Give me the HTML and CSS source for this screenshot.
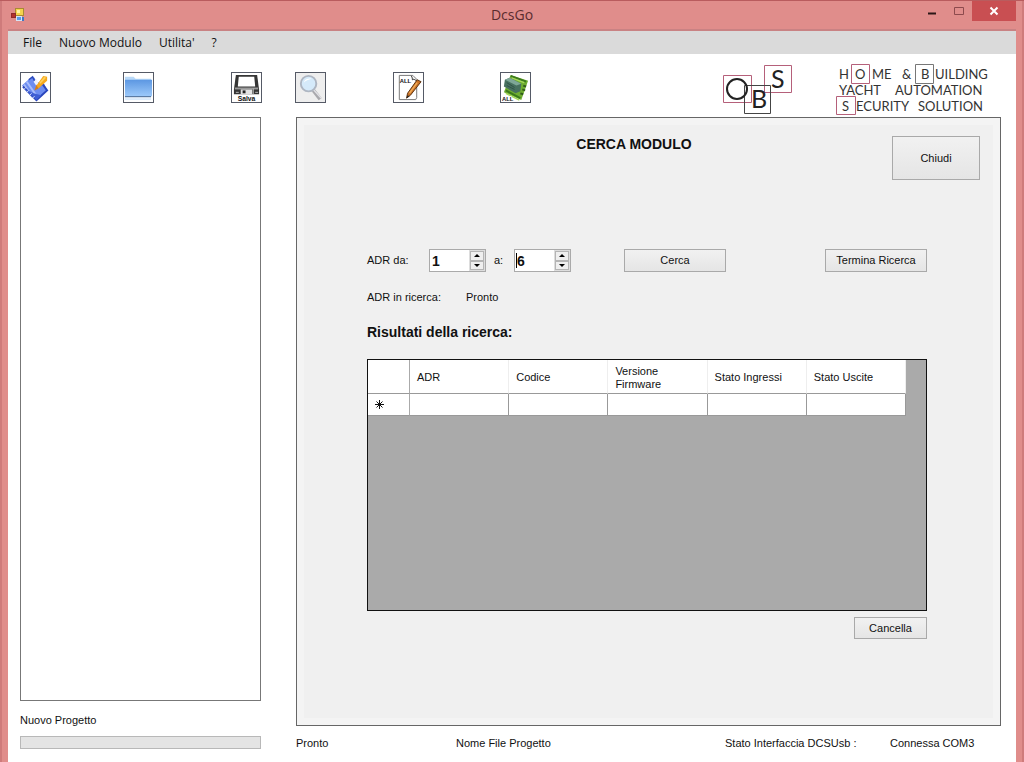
FILE: index.html
```html
<!DOCTYPE html>
<html lang="it">
<head>
<meta charset="utf-8">
<title>DcsGo</title>
<link rel="stylesheet" href="styles.css">
</head>
<body>
<div class="window">
  <header class="titlebar">
    <svg class="app-icon" width="14" height="14" viewBox="0 0 14 14" aria-hidden="true">
      <rect x="4.500" y="0.500" width="8" height="7" fill="#f5d34c" stroke="#a88a34"/>
      <rect x="6" y="2" width="3" height="3" fill="#fff3a8"/>
      <rect x="0.500" y="5.500" width="4" height="4" fill="#b3312c" stroke="#8f2a2a"/>
      <rect x="5.500" y="8.500" width="5" height="4" fill="#5b9be8" stroke="#d5e4f5"/>
      <path d="M11 9v4h2V9z" fill="#3f76c4"/>
    </svg>
    <h1 class="title">DcsGo</h1>
    <div class="window-buttons">
      <button class="wbtn" type="button" aria-label="Riduci a icona"><svg width="10" height="10"><path d="M1 7.500h8" stroke="#2b1717" stroke-width="2"/></svg></button>
      <button class="wbtn" type="button" aria-label="Ingrandisci"><svg width="10" height="10"><path d="M.5 1.500h9v7h-9z" fill="none" stroke="#8d4a4d"/></svg></button>
      <button class="wbtn wbtn-close" type="button" aria-label="Chiudi finestra"><svg width="10" height="10"><path d="M1.500 1.500l7 7M8.500 1.500l-7 7" stroke="#fff" stroke-width="2"/></svg></button>
    </div>
  </header>

  <nav class="menu">
    <button type="button">File</button>
    <button type="button">Nuovo Modulo</button>
    <button type="button">Utilita'</button>
    <button type="button">?</button>
  </nav>

  <div class="toolbar">
    <div class="tools tools-left">
      <button class="tool" type="button" aria-label="Nuovo progetto">
        <svg viewBox="0 0 30 30">
          <path d="M1 13L11 4l3 1 2 4 8 2 3 7-9 9-3 1z" fill="#6d8df0"/>
          <path d="M3 12l9 13M6 9l11 16" stroke="#a9bdfb" stroke-width="2"/>
          <path d="M2 14l14 14 11-10-5-7" fill="none" stroke="#2a46bd" stroke-width="2"/>
          <path d="M3 16l13 12 5-5-8-2z" fill="#3f5fd4"/>
          <path d="M8 7l4-3 3 6 6 3" fill="none" stroke="#2948bb" stroke-width="1.500"/>
          <path d="M13 9l3-3 3 7-2 2z" fill="#eef2ff"/>
          <path d="M3 17l2-2M6 20l2-2M9 23l2-2M12 26l2-2" stroke="#dfe7ff"/>
          <path d="M16 13l7-10 4 1v4l-9 8z" fill="#f6a81c"/>
          <path d="M19 10l5-6 2 1-6 6z" fill="#ffd15c"/>
          <path d="M16 12l2 4-4 2z" fill="#d97d12"/>
        </svg>
      </button>
      <button class="tool" type="button" aria-label="Apri">
        <svg viewBox="0 0 30 30">
          <defs><linearGradient id="folder" x2="0" y2="1"><stop stop-color="#5c97e2"/><stop offset="1" stop-color="#9cc9fa"/></linearGradient></defs>
          <path d="M1 4h9l2 2h16v19H1z" fill="#b9d9f8"/>
          <path d="M1 7h28v17H1z" fill="url(#folder)"/>
          <path d="M1 24.500h27" stroke="#44648e"/>
          <path d="M1 27h27" stroke="#dcebfa" stroke-width="2"/>
        </svg>
      </button>
      <button class="tool" type="button" aria-label="Salva">
        <svg viewBox="0 0 30 30">
          <path d="M4 2h22l2 15v5H2v-5z" fill="#353535"/>
          <path d="M7 4h16l1 10H6z" fill="#fff"/>
          <path d="M3 16h24" stroke="#999" stroke-width="2"/>
          <path d="M9 17h12v5H9z" fill="#e3e3e3"/>
          <path d="M11 18h3v3h-3z" fill="#222"/>
          <path d="M22 16v6M4 20h3M24 20h3" stroke="#bbb"/>
          <text x="15" y="29" text-anchor="middle" class="tool-text">Salva</text>
        </svg>
      </button>
    </div>
    <div class="tools tools-right">
      <button class="tool tool-search" type="button" aria-label="Cerca modulo">
        <svg viewBox="0 0 30 30">
          <path d="M18 18l7 9" stroke="#a9a9ad" stroke-width="4"/>
          <path d="M18 17l8 9" stroke="#e2e2e6" stroke-width="1.500"/>
          <circle cx="13" cy="11" r="8" fill="#d5eafa" stroke="#aeb6c2" stroke-width="2"/>
          <path d="M8 10c1-4 5-5 8-4-3 1-6 2-8 4z" fill="#fff"/>
        </svg>
      </button>
      <button class="tool" type="button" aria-label="Modifica tutti">
        <svg viewBox="0 0 30 30">
          <path d="M5.500 2.500h14l4 4v19l-1 2h-17z" fill="#fff" stroke="#777"/>
          <path d="M18 3c1 2 1 3 1 4 2-1 3 0 5 2" fill="#ddd" stroke="#333"/>
          <text x="6" y="10" class="tool-text tool-text-small">ALL</text>
          <path d="M24 7l4 2-11 14-4 3 1-5z" fill="#c87025" stroke="#5b3210"/>
          <path d="M24 10l-8 11" stroke="#f2ad58" stroke-width="1.500"/>
          <path d="M13 26l1-3 2 1z" fill="#222"/>
        </svg>
      </button>
      <button class="tool" type="button" aria-label="Programma tutti">
        <svg viewBox="0 0 30 30">
          <path d="M10 2l18 6-7 20L3 20z" fill="#6fae31"/>
          <path d="M10 3l16 6M5 18l15 8" stroke="#3c7a1d" stroke-width="2"/>
          <path d="M11 5l13 5M5 21l14 7" stroke="#a5d75b" stroke-width="1.500"/>
          <path d="M4 7l5-2 12 6-1 8-5 2L3 14z" fill="#47705f"/>
          <path d="M4 7l5-2 12 6-5 2z" fill="#7ea797"/>
          <path d="M6 10l8 5M6 13l8 4" stroke="#2f5247"/>
          <path d="M23 13l3 1M22 17l3 1M20 21l3 1" stroke="#315d1d" stroke-width="2"/>
          <path d="M1 24h10v5H1z" fill="#fff"/>
          <text x="1" y="29" class="tool-text tool-text-small">ALL</text>
        </svg>
      </button>
    </div>
    <svg class="brand" width="270" height="52" viewBox="0 0 270 52" role="img" aria-label="OBS Home &amp; Building Yacht Automation Security Solution">
      <g fill="none">
        <path d="M1.500 11.500h28v27h-28zM42.500 1.500h27v27h-27z" stroke="#b5607a"/>
        <path d="M22.500 21.500h26v28h-26z" stroke="#444"/>
        <circle cx="15" cy="25" r="10" stroke="#222" stroke-width="2"/>
        <path d="M129.500 .5h18v19h-18zM114.500 32.500h19v18h-19z" stroke="#b5607a"/>
        <path d="M193.500 .5h18v19h-18z" stroke="#777"/>
      </g>
      <text x="29" y="44" class="brand-big">B</text>
      <text x="49" y="24" class="brand-big">S</text>
      <g class="brand-small">
        <text x="117" y="15">H</text><text x="133" y="15">O</text><text x="150" y="15">ME</text>
        <text x="180" y="15">&amp;</text><text x="199" y="15">B</text><text x="213" y="15">UILDING</text>
        <text x="117" y="31">YACHT</text><text x="173" y="31">AUTOMATION</text>
        <text x="120" y="47">S</text><text x="134" y="47">ECURITY</text><text x="196" y="47">SOLUTION</text>
      </g>
    </svg>
  </div>

  <main class="workspace">
    <aside class="project">
      <div class="tree"></div>
      <label class="project-label" for="avanzamento">Nuovo Progetto</label>
      <progress id="avanzamento" class="progress" value="0" max="100"></progress>
    </aside>

    <div class="content">
      <section class="panel">
        <div class="panel-head">
          <h2>CERCA MODULO</h2>
          <button class="btn btn-close" type="button">Chiudi</button>
        </div>
        <div class="panel-body">
          <form class="search">
            <label for="da" class="label-from">ADR da:</label>
            <div class="spin">
              <input id="da" type="text" inputmode="numeric" value="1">
              <div class="arrows">
                <button type="button" aria-label="Aumenta"><svg width="6" height="3"><path d="M0 3l3-3 3 3z"/></svg></button>
                <button type="button" aria-label="Diminuisci"><svg width="6" height="3"><path d="M0 0l3 3 3-3z"/></svg></button>
              </div>
            </div>
            <label for="a" class="label-to">a:</label>
            <div class="spin spin-active">
              <input id="a" type="text" inputmode="numeric" value="6">
              <div class="arrows">
                <button type="button" aria-label="Aumenta"><svg width="6" height="3"><path d="M0 3l3-3 3 3z"/></svg></button>
                <button type="button" aria-label="Diminuisci"><svg width="6" height="3"><path d="M0 0l3 3 3-3z"/></svg></button>
              </div>
            </div>
            <button class="btn btn-search" type="button">Cerca</button>
            <button class="btn btn-stop" type="button">Termina Ricerca</button>
          </form>
          <div class="progress-line"><span>ADR in ricerca:</span><span>Pronto</span></div>
          <h3>Risultati della ricerca:</h3>
          <div class="grid-view">
            <table>
              <thead>
                <tr><th class="row-head"></th><th>ADR</th><th>Codice</th><th>Versione Firmware</th><th>Stato Ingressi</th><th>Stato Uscite</th></tr>
              </thead>
              <tbody>
                <tr><th class="row-head" aria-label="Nuova riga"><svg width="9" height="9"><path d="M4.500 0v9M0 4.500h9M1.500 1.500l6 6M7.500 1.500l-6 6" stroke="#111"/></svg></th><td></td><td></td><td></td><td></td><td></td></tr>
              </tbody>
            </table>
          </div>
          <button class="btn btn-clear" type="button">Cancella</button>
        </div>
      </section>
      <footer class="status">
        <span>Pronto</span>
        <span>Nome File Progetto</span>
        <span class="status-usb">Stato Interfaccia DCSUsb :</span>
        <span class="status-port">Connessa COM3</span>
      </footer>
    </div>
  </main>
</div>
</body>
</html>
```

FILE: styles.css
```css
* {
  box-sizing: border-box;
}

body {
  margin: 0;
  background: #e08d8b;
  color: #111;
  font: 11px/13px "Liberation Sans", Arial, sans-serif;
}

button,
input {
  font: inherit;
  color: inherit;
  margin: 0;
}

h1,
h2,
h3 {
  margin: 0;
}

svg {
  display: block;
}

.window {
  display: flex;
  flex-direction: column;
  min-height: 100vh;
  padding: 0 8px;
  border-top: 1px solid #b95c5e;
  box-shadow: inset 2px 0 #cf7b7b, inset -2px 0 #cf7b7b;
}

/* Title bar */
.titlebar {
  display: grid;
  grid-template-columns: 1fr auto 1fr;
  height: 30px;
  border-bottom: 2px solid #c98283;
}

.app-icon {
  margin: 7px 0 0 3px;
}

.title {
  font: 14px/28px "Open Sans", "Noto Sans", sans-serif;
  color: #5a2c2e;
}

.window-buttons {
  display: flex;
  justify-content: flex-end;
  align-items: flex-start;
}

.wbtn {
  display: grid;
  place-items: center;
  width: 27px;
  height: 20px;
  padding: 0;
  border: 0;
  background: none;
}

.wbtn-close {
  width: 44px;
  background: #c94f52;
}

/* Menu */
.menu {
  display: flex;
  align-items: center;
  gap: 17px;
  height: 23px;
  padding-left: 15px;
  background: #dadada;
}

.menu button {
  padding: 0;
  border: 0;
  background: none;
  font: 12px/20px "Open Sans", "Noto Sans", sans-serif;
}

/* Toolbar */
.toolbar {
  display: flex;
  height: 63px;
  padding: 10px 24px 0 12px;
  background: #fff;
}

.tools {
  display: grid;
  align-items: start;
  padding-top: 8px;
}

.tools-left {
  grid-template-columns: 103px 108px auto;
  margin-right: 33px;
}

.tools-right {
  grid-template-columns: 98px 107px auto;
}

.tool {
  width: 31px;
  height: 31px;
  padding: 0;
  border: 1px solid #555a66;
  background: #fff;
}

.tool-search {
  background: #eee;
}

.tool-text {
  font: bold 7px "Liberation Sans", sans-serif;
  fill: #111;
}

.tool-text-small {
  font-size: 6px;
}

.brand {
  margin-left: auto;
}

.brand-big {
  font: 25px Lato, sans-serif;
  fill: #222;
}

.brand-small {
  font: 13px Lato, sans-serif;
  fill: #333;
}

/* Workspace */
.workspace {
  flex: 1;
  display: grid;
  grid-template-columns: 241px 1fr;
  gap: 35px;
  padding: 0 15px 0 12px;
  background: #fff;
}

.project {
  display: flex;
  flex-direction: column;
  padding-bottom: 13px;
}

.tree {
  flex: 1;
  border: 1px solid #777;
}

.project-label {
  margin: 13px 0 9px;
}

.progress {
  appearance: none;
  display: block;
  width: 100%;
  height: 13px;
  border: 1px solid #b8b8b8;
  background: #e4e4e4;
}

.progress::-webkit-progress-bar {
  background: #e4e4e4;
}

.content {
  display: flex;
  flex-direction: column;
}

.panel {
  flex: 1;
  border: 1px solid #666;
  background: #f0f0f0;
  box-shadow: inset 0 0 0 7px #f4f4f4;
}

.panel-head {
  display: grid;
  grid-template-columns: 1fr 88px;
  padding: 18px 20px 0 79px;
  text-align: center;
}

h2,
h3 {
  font-size: 14px;
  line-height: 16px;
}

.btn {
  padding: 0;
  border: 1px solid #a9a9a9;
  background: linear-gradient(#f1f1f1, #e5e5e5);
}

.btn-close {
  height: 44px;
}

.panel-body {
  display: flex;
  flex-direction: column;
  padding: 69px 73px 0 70px;
}

.search {
  display: flex;
  align-items: center;
}

.label-from {
  width: 62px;
}

.label-to {
  width: 28px;
  padding-left: 8px;
}

.spin {
  position: relative;
  display: flex;
  width: 57px;
  height: 23px;
  border: 1px solid #aaa;
  background: #fff;
}

.spin input {
  flex: 1;
  min-width: 0;
  padding: 0 0 0 2px;
  border: 0;
  background: none;
  font-size: 14px;
  font-weight: bold;
}

.spin-active::before {
  content: "";
  position: absolute;
  left: 1px;
  top: 3px;
  width: 1px;
  height: 15px;
  background: #000;
}

.arrows {
  display: flex;
  flex-direction: column;
  width: 16px;
  padding: 1px;
  background: #ddd;
}

.arrows button {
  flex: 1;
  display: grid;
  place-items: center;
  padding: 0;
  border: 1px solid #b5b5b5;
  background: #efefef;
}

.btn-search {
  width: 102px;
  height: 23px;
  margin-left: 53px;
}

.btn-stop {
  width: 102px;
  height: 23px;
  margin-left: auto;
}

.progress-line {
  display: flex;
  gap: 25px;
  margin: 19px 0 20px;
}

.grid-view {
  height: 252px;
  margin-top: 19px;
  border: 1px solid #111;
  background: #aaa;
}

table {
  border-collapse: separate;
  border-spacing: 0;
  table-layout: fixed;
  width: 538px;
}

th,
td {
  padding: 0 7px;
  background: #fff;
  font-weight: normal;
  text-align: left;
}

thead th {
  height: 34px;
  padding-top: 2px;
  border-right: 1px solid #eee;
  border-bottom: 1px solid #999;
}

tbody th,
tbody td {
  height: 22px;
  border-right: 1px solid #999;
  border-bottom: 1px solid #999;
}

.row-head {
  width: 42px;
  border-right-color: #aaa;
}

.btn-clear {
  align-self: flex-end;
  width: 73px;
  height: 22px;
  margin-top: 6px;
}

/* Status line */
.status {
  display: flex;
  height: 36px;
  padding-top: 11px;
}

.status span:first-child {
  width: 160px;
}

.status-usb {
  margin-left: auto;
  width: 165px;
}

.status-port {
  width: 111px;
}
```
